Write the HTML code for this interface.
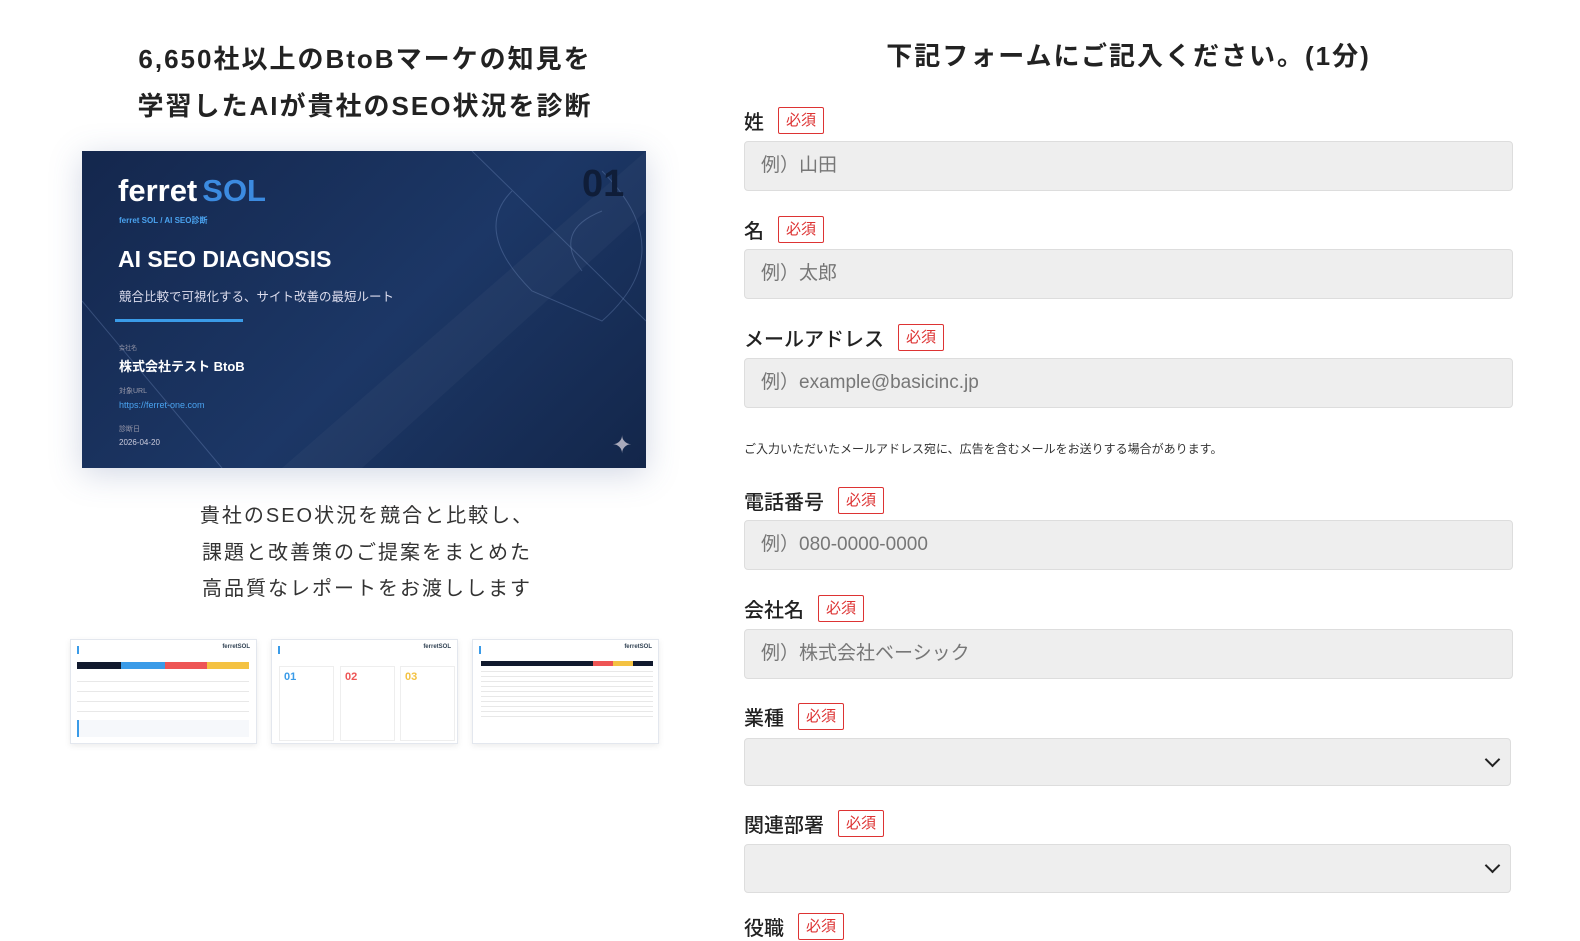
<!DOCTYPE html>
<html><head><meta charset="utf-8"><style>
*{margin:0;padding:0;box-sizing:border-box}
body{width:1580px;height:928px;overflow:hidden;background:#fff;font-family:"Liberation Sans","Noto Sans CJK JP",sans-serif;color:#222;position:relative}
.a{position:absolute}
.h{font-size:26px;font-weight:bold;letter-spacing:2px;text-align:center;color:#222}
.lbl{position:absolute;left:744px;font-size:20px;font-weight:500;display:flex;align-items:center;color:#222;height:28px}
.bd{display:inline-block;margin-left:14px;border:1px solid #d33;color:#d33;font-size:15px;font-weight:normal;padding:0 7px;height:27px;line-height:25px;border-radius:2px}
.in{position:absolute;left:744px;width:769px;height:50px;background:#eee;border:1px solid #ddd;border-radius:4px;font-size:19px;color:#777;padding-left:16px;line-height:48px}
.sel{width:767px}
.sel::after{content:"";position:absolute;right:12px;top:15px;width:9px;height:9px;border-right:2px solid #222;border-bottom:2px solid #222;transform:rotate(45deg)}
.card{left:82px;top:151px;width:564px;height:317px;background:linear-gradient(135deg,#14274d 0%,#1c3766 55%,#13264a 100%);overflow:hidden;box-shadow:0 6px 30px rgba(80,100,150,.25)}
.th{background:#fff;border:1px solid #e3e7ee;box-shadow:0 2px 6px rgba(0,0,0,.08);height:105px;top:639px;overflow:hidden}
</style></head><body>
<div class="a h" style="left:60px;width:610px;top:36px;line-height:47px">6,650社以上のBtoBマーケの知見を<br>学習したAIが貴社のSEO状況を診断</div>
<div class="a card">
<svg class="a" style="left:0;top:0" width="564" height="317"><g stroke="rgba(150,180,230,.25)" fill="none" stroke-width="1"><path d="M390 0 L564 170"/><path d="M0 150 L140 317"/><path d="M430 40 Q390 80 450 140 L520 170 Q600 100 520 20"/><path d="M500 120 Q470 80 520 60"/></g><path d="M200 317 L564 0 L564 60 L280 317Z" fill="rgba(255,255,255,.03)"/></svg>
<div class="a" style="left:36px;top:22px;font-size:31px;font-weight:bold;color:#fff">ferret<span style="color:#3c8be0;margin-left:5px">SOL</span></div>
<div class="a" style="left:37px;top:64px;font-size:8px;color:#4aa3f0;font-weight:bold">ferret SOL / AI SEO診断</div>
<div class="a" style="left:500px;top:12px;font-size:38px;font-weight:bold;color:#0f1d38">01</div>
<div class="a" style="left:36px;top:95px;font-size:23px;font-weight:bold;color:#fff">AI SEO DIAGNOSIS</div>
<div class="a" style="left:37px;top:135px;font-size:12.5px;color:#dde">競合比較で可視化する、サイト改善の最短ルート</div>
<div class="a" style="left:33px;top:168px;width:128px;height:3px;background:#3a9be8"></div>
<div class="a" style="left:37px;top:192px;font-size:6px;color:#99a">会社名</div>
<div class="a" style="left:37px;top:205px;font-size:13px;font-weight:bold;color:#fff">株式会社テスト BtoB</div>
<div class="a" style="left:37px;top:235px;font-size:7px;color:#99a">対象URL</div>
<div class="a" style="left:37px;top:249px;font-size:9px;color:#4aa3f0">https://ferret-one.com</div>
<div class="a" style="left:37px;top:273px;font-size:7px;color:#99a">診断日</div>
<div class="a" style="left:37px;top:287px;font-size:8px;color:#ccd">2026-04-20</div>
<div class="a" style="left:530px;top:280px;font-size:24px;color:#aab">✦</div>
</div>
<div class="a" style="left:62px;width:610px;top:498px;text-align:center;font-size:20px;line-height:36.5px;letter-spacing:2px;color:#333">貴社のSEO状況を競合と比較し、<br>課題と改善策のご提案をまとめた<br>高品質なレポートをお渡しします</div>
<div class="a th" style="left:70px;width:187px">
<div class="a" style="left:6px;top:6px;width:2px;height:8px;background:#3a9be8"></div><div class="a" style="right:6px;top:4px;font-size:6px;font-weight:bold;color:#345">ferretSOL</div>
<div class="a" style="left:6px;top:22px;width:172px;height:7px;background:#111a2e"></div>
<div class="a" style="left:50px;top:22px;width:44px;height:7px;background:#3a9be8"></div><div class="a" style="left:94px;top:22px;width:42px;height:7px;background:#e55"></div><div class="a" style="left:136px;top:22px;width:42px;height:7px;background:#f4c242"></div>
<div class="a" style="left:6px;top:32px;width:172px;height:40px;background:repeating-linear-gradient(#fff 0 9px,#e8e8e8 9px 10px)"></div>
<div class="a" style="left:6px;top:80px;width:172px;height:17px;border-left:2px solid #3a9be8;background:#f6f8fb"></div></div>
<div class="a th" style="left:271px;width:187px">
<div class="a" style="left:6px;top:6px;width:2px;height:8px;background:#3a9be8"></div><div class="a" style="right:6px;top:4px;font-size:6px;font-weight:bold;color:#345">ferretSOL</div>
<div class="a" style="left:7px;top:26px;width:55px;height:75px;border:1px solid #eee;font-size:11px;font-weight:bold;color:#3a9be8;padding:4px">01</div>
<div class="a" style="left:68px;top:26px;width:55px;height:75px;border:1px solid #eee;font-size:11px;font-weight:bold;color:#e55;padding:4px">02</div>
<div class="a" style="left:128px;top:26px;width:55px;height:75px;border:1px solid #eee;font-size:11px;font-weight:bold;color:#f4c242;padding:4px">03</div></div>
<div class="a th" style="left:472px;width:187px">
<div class="a" style="left:6px;top:6px;width:2px;height:8px;background:#3a9be8"></div><div class="a" style="right:6px;top:4px;font-size:6px;font-weight:bold;color:#345">ferretSOL</div>
<div class="a" style="left:8px;top:21px;width:172px;height:5px;background:#111a2e"></div>
<div class="a" style="left:120px;top:21px;width:20px;height:5px;background:#e55"></div><div class="a" style="left:140px;top:21px;width:20px;height:5px;background:#f4c242"></div>
<div class="a" style="left:8px;top:27px;width:172px;height:52px;background:repeating-linear-gradient(#fff 0 4px,#e8e8e8 4px 5px)"></div></div>

<div class="a h" style="left:744px;width:769px;top:36px;line-height:40px">下記フォームにご記入ください。(1分)</div>
<div class="lbl" style="top:106px">姓<span class="bd">必須</span></div>
<div class="in" style="top:141px">例）山田</div>
<div class="lbl" style="top:215px">名<span class="bd">必須</span></div>
<div class="in" style="top:249px">例）太郎</div>
<div class="lbl" style="top:323px">メールアドレス<span class="bd">必須</span></div>
<div class="in" style="top:358px">例）example@basicinc.jp</div>
<div class="a" style="left:744px;top:440px;font-size:12px;color:#333">ご入力いただいたメールアドレス宛に、広告を含むメールをお送りする場合があります。</div>
<div class="lbl" style="top:486px">電話番号<span class="bd">必須</span></div>
<div class="in" style="top:520px">例）080-0000-0000</div>
<div class="lbl" style="top:594px">会社名<span class="bd">必須</span></div>
<div class="in" style="top:629px">例）株式会社ベーシック</div>
<div class="lbl" style="top:702px">業種<span class="bd">必須</span></div>
<div class="in sel" style="top:738px;height:48px"></div>
<div class="lbl" style="top:809px">関連部署<span class="bd">必須</span></div>
<div class="in sel" style="top:844px;height:49px"></div>
<div class="lbl" style="top:912px">役職<span class="bd">必須</span></div>
</body></html>
